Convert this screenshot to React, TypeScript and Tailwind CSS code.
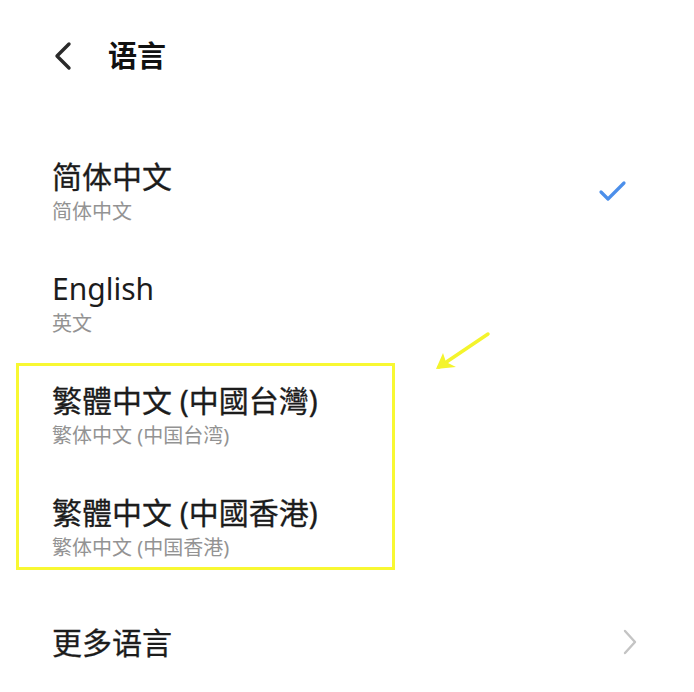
import React from 'react';

const font = { fontFamily: '"Noto Sans", "Noto Sans CJK SC", sans-serif' };

interface Lang {
  title: string;
  sub: string;
  checked?: boolean;
  latin?: boolean;
}

const Row: React.FC<Lang> = ({ title, sub, checked, latin }) => (
  <div className="flex items-center justify-between pl-[52px] pr-[66px] h-[112px]">
    <div className="flex flex-col">
      <span
        className={
          latin
            ? 'text-[30px] leading-[36px] text-[#1c1c1c]'
            : 'text-[30px] leading-[36px] text-[#1c1c1c] [-webkit-text-stroke:0.3px_#1c1c1c]'
        }
      >
        {title}
      </span>
      <span className="text-[20px] leading-[26px] text-[#939393] mt-[4px]">{sub}</span>
    </div>
    {checked && (
      <svg width="30" height="24" viewBox="0 0 30 24">
        <path d="M3 12 L10 19 L26 3" fill="none" stroke="#4c8fea" strokeWidth="3.2" strokeLinecap="round" strokeLinejoin="round" />
      </svg>
    )}
  </div>
);

export default function App() {
  return (
    <div className="relative w-[694px] h-[692px] bg-white overflow-hidden" style={font}>
      <header className="flex items-center h-[112px] pl-[52px]">
        <svg width="22" height="30" viewBox="0 0 22 30">
          <path d="M17 3 L5 15 L17 27" fill="none" stroke="#2a2a2a" strokeWidth="3.4" strokeLinecap="round" strokeLinejoin="round" />
        </svg>
        <h1 className="ml-[34px] text-[29px] font-bold text-[#111]">语言</h1>
      </header>

      <div className="pt-[24px]">
        <Row title="简体中文" sub="简体中文" checked />
        <Row title="English" sub="英文" latin />
        <Row title="繁體中文 (中國台灣)" sub="繁体中文 (中国台湾)" />
        <Row title="繁體中文 (中國香港)" sub="繁体中文 (中国香港)" />
        <div className="flex items-center justify-between pl-[52px] pr-[56px] h-[116px]">
          <span className="text-[30px] text-[#1c1c1c] [-webkit-text-stroke:0.3px_#1c1c1c]">更多语言</span>
          <svg width="16" height="26" viewBox="0 0 16 26">
            <path d="M3 2 L13 13 L3 24" fill="none" stroke="#c4c4c4" strokeWidth="2.4" strokeLinecap="round" strokeLinejoin="round" />
          </svg>
        </div>
      </div>

      {/* annotation overlay */}
      <div className="absolute left-[16px] top-[363px] w-[379px] h-[207px] border-[3px] border-[#f8f832] pointer-events-none" />
      <svg className="absolute left-[430px] top-[326px]" width="64" height="48" viewBox="0 0 64 48">
        <path d="M58 8 L9 41" stroke="#f4f42c" strokeWidth="3.5" strokeLinecap="round" />
        <path d="M6 43 L13 27 L16 36 L26 41 Z" fill="#f4f42c" />
      </svg>
    </div>
  );
}
